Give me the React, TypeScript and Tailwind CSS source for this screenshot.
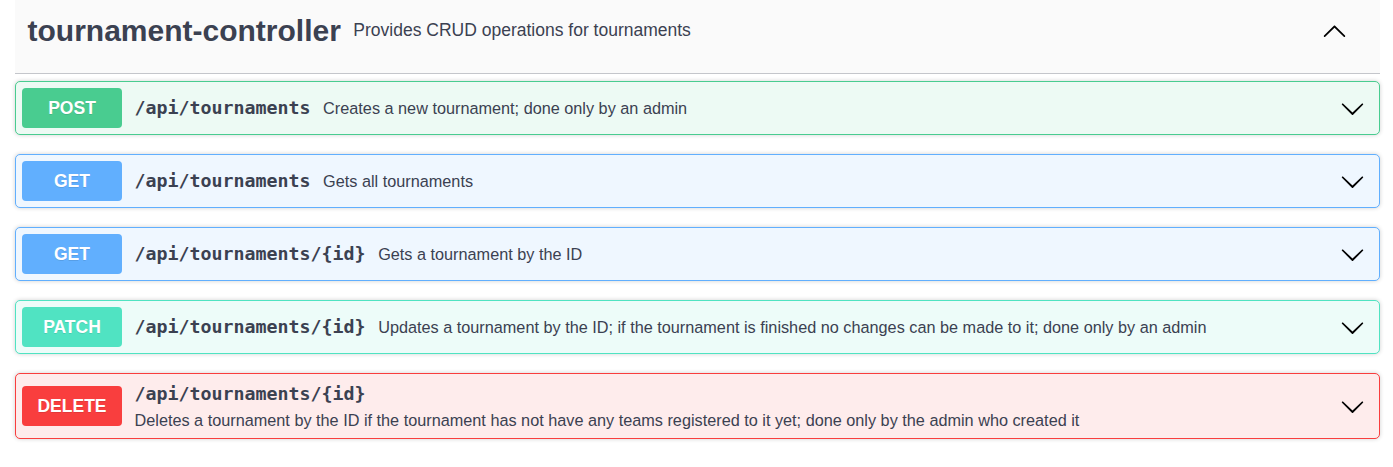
import React from 'react';

type Op = {
  method: string;
  path: string;
  desc: string;
  badge: string;
  block: string;
  stacked?: boolean;
};

const ops: Op[] = [
  {
    method: 'POST',
    path: '/api/tournaments',
    desc: 'Creates a new tournament; done only by an admin',
    badge: 'bg-[#49cc90]',
    block: 'bg-[#edfaf4] border-[#49cc90]',
  },
  {
    method: 'GET',
    path: '/api/tournaments',
    desc: 'Gets all tournaments',
    badge: 'bg-[#61affe]',
    block: 'bg-[#eff7ff] border-[#61affe]',
  },
  {
    method: 'GET',
    path: '/api/tournaments/{id}',
    desc: 'Gets a tournament by the ID',
    badge: 'bg-[#61affe]',
    block: 'bg-[#eff7ff] border-[#61affe]',
  },
  {
    method: 'PATCH',
    path: '/api/tournaments/{id}',
    desc: 'Updates a tournament by the ID; if the tournament is finished no changes can be made to it; done only by an admin',
    badge: 'bg-[#50e3c2]',
    block: 'bg-[#edfcf9] border-[#50e3c2]',
  },
  {
    method: 'DELETE',
    path: '/api/tournaments/{id}',
    desc: 'Deletes a tournament by the ID if the tournament has not have any teams registered to it yet; done only by the admin who created it',
    badge: 'bg-[#f93e3e]',
    block: 'bg-[#feecec] border-[#f93e3e]',
    stacked: true,
  },
];

function ArrowDown() {
  return (
    <svg width="25" height="25" viewBox="0 0 20 20" className="shrink-0 mr-[8px]">
      <path
        fill="#000"
        d="M17.418 6.109c.272-.268.709-.268.979 0s.271.701 0 .969l-7.908 7.83c-.27.268-.707.268-.979 0l-7.908-7.83c-.27-.268-.27-.701 0-.969.271-.268.709-.268.979 0L10 13.25l7.418-7.141z"
      />
    </svg>
  );
}

function ArrowUp() {
  return (
    <svg width="25" height="25" viewBox="0 0 20 20" className="shrink-0">
      <path
        fill="#000"
        d="M17.418 14.908c.272.268.709.268.979 0s.271-.701 0-.969l-7.908-7.83c-.27-.268-.707-.268-.979 0l-7.908 7.83c-.27.268-.27.701 0 .969.271.268.709.268.979 0L10 7.767l7.418 7.141z"
      />
    </svg>
  );
}

const mono = "font-['DejaVu_Sans_Mono',monospace]";

function Operation({ op }: { op: Op }) {
  return (
    <div
      className={`mb-[19px] border rounded-[5px] shadow-[0_0_4px_rgba(0,0,0,0.19)] ${op.block}`}
    >
      <div className="flex items-center p-[6px]">
        <div
          className={`w-[100px] h-[40px] shrink-0 rounded-[4px] flex items-center justify-center text-white font-bold text-[17.5px] [text-shadow:0_1px_0_rgba(0,0,0,0.1)] ${op.badge}`}
        >
          {op.method}
        </div>
        {op.stacked ? (
          <div className="flex-1 flex flex-col pl-[12.5px]">
            <span className={`${mono} font-bold text-[18.3px] leading-[28px]`}>{op.path}</span>
            <span className="text-[16.25px] leading-[24px]">{op.desc}</span>
          </div>
        ) : (
          <div className="flex-1 flex items-center pl-[12.5px]">
            <span className={`${mono} font-bold text-[18.3px] pr-[12.5px]`}>{op.path}</span>
            <span className="text-[16.25px]">{op.desc}</span>
          </div>
        )}
        <ArrowDown />
      </div>
    </div>
  );
}

export default function App() {
  return (
    <div className="w-[1393px] h-[467px] bg-white pl-[15px] pr-[13px] text-[#3b4151] font-['Liberation_Sans',Arial,sans-serif]">
      <div className="h-[74px] bg-[#fafafa] border-b border-[#c4c6cb]">
        <div className="h-[60px] flex items-center pl-[12.5px] pr-[33px]">
          <h3 className="text-[30px] font-bold">tournament-controller</h3>
          <small className="flex-1 text-[17.5px] px-[12.5px]">Provides CRUD operations for tournaments</small>
          <ArrowUp />
        </div>
      </div>
      <div className="pt-[7px]">
        {ops.map((op, i) => (
          <Operation key={i} op={op} />
        ))}
      </div>
    </div>
  );
}
